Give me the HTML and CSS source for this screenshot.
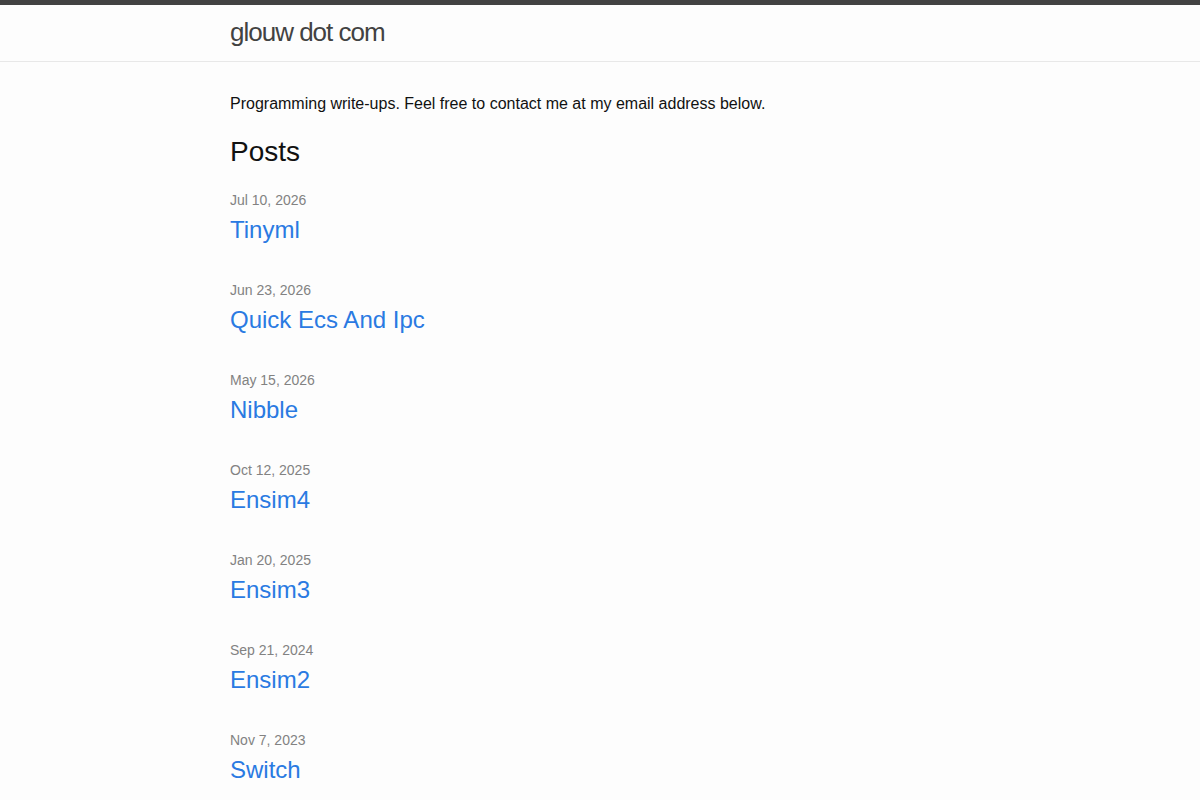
FILE: index.html
```html
<!DOCTYPE html>
<html lang="en">
<head>
  <meta charset="UTF-8">
  <title>glouw dot com</title>
  <link rel="stylesheet" href="styles.css">
</head>
<body>
  <header class="site-header">
    <div class="wrapper">
      <a class="site-title" href="/">glouw dot com</a>
    </div>
  </header>

  <main class="page-content">
    <div class="wrapper">
      <p>Programming write-ups. Feel free to contact me at my email address below.</p>

      <h2 class="post-list-heading">Posts</h2>
      <ul class="post-list">
        <li>
          <span class="post-meta">Jul 10, 2026</span>
          <h3><a class="post-link" href="#">Tinyml</a></h3>
        </li>
        <li>
          <span class="post-meta">Jun 23, 2026</span>
          <h3><a class="post-link" href="#">Quick Ecs And Ipc</a></h3>
        </li>
        <li>
          <span class="post-meta">May 15, 2026</span>
          <h3><a class="post-link" href="#">Nibble</a></h3>
        </li>
        <li>
          <span class="post-meta">Oct 12, 2025</span>
          <h3><a class="post-link" href="#">Ensim4</a></h3>
        </li>
        <li>
          <span class="post-meta">Jan 20, 2025</span>
          <h3><a class="post-link" href="#">Ensim3</a></h3>
        </li>
        <li>
          <span class="post-meta">Sep 21, 2024</span>
          <h3><a class="post-link" href="#">Ensim2</a></h3>
        </li>
        <li>
          <span class="post-meta">Nov 7, 2023</span>
          <h3><a class="post-link" href="#">Switch</a></h3>
        </li>
      </ul>
    </div>
  </main>
</body>
</html>
```

FILE: styles.css
```css
body {
  margin: 0;
  font-family: "Liberation Sans", Arial, Helvetica, sans-serif;
  font-size: 16px;
  line-height: 1.5;
  color: #111;
  background-color: #fdfdfd;
}
a {
  color: #2a7ae2;
  text-decoration: none;
}
.wrapper {
  max-width: 740px;
  margin: 0 auto;
  padding: 0 30px;
}
.site-header {
  border-top: 5px solid #424242;
  border-bottom: 1px solid #e8e8e8;
  min-height: 56px;
}
.site-title {
  display: inline-block;
  font-size: 26px;
  font-weight: 300;
  line-height: 54px;
  letter-spacing: -1px;
  color: #424242;
}
.page-content {
  padding: 30px 0;
}
p {
  margin: 0 0 15px;
}
.post-list-heading {
  font-size: 28px;
  font-weight: 400;
  line-height: 42px;
  margin: 0 0 17px;
}
.post-list {
  list-style: none;
  margin: 0;
  padding: 0;
}
.post-list li {
  margin-bottom: 32px;
}
.post-meta {
  display: block;
  font-size: 14px;
  line-height: 21px;
  color: #828282;
}
.post-list h3 {
  margin: 0;
  font-size: 24px;
  font-weight: 400;
  line-height: 37px;
}
.post-link {
  display: block;
}
```
